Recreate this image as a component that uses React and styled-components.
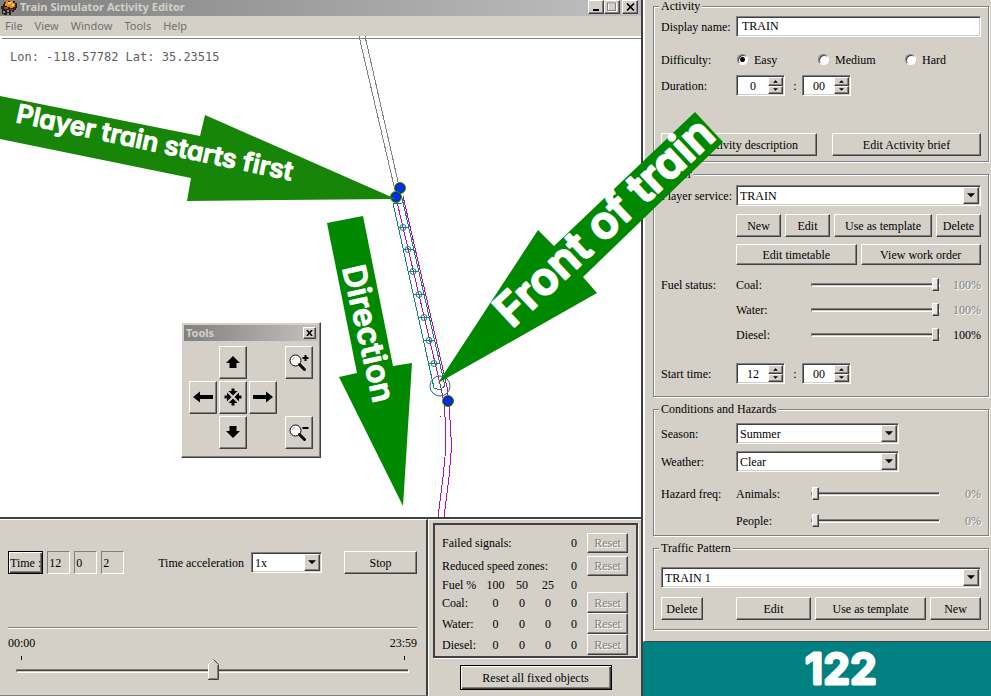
import React from "react";
import styled, { createGlobalStyle, css } from "styled-components";

const face = "#d4d0c8";
const shade = "#808080";
const dark = "#404040";
const serif = '"Liberation Serif", "Times New Roman", serif';
const sans = '"Noto Sans", Tahoma, sans-serif';

const GlobalStyle = createGlobalStyle`
  *, *::before, *::after { box-sizing: border-box; }
  body { margin: 0; background: ${face}; }
  button, input, select { font: inherit; color: inherit; margin: 0; }
`;

const raised = css`
  border: 1px solid;
  border-color: #fff ${dark} ${dark} #fff;
  box-shadow: inset -1px -1px ${shade};
`;

const sunken = css`
  border: 1px solid;
  border-color: ${shade} #fff #fff ${shade};
  box-shadow: inset 1px 1px ${dark}, inset -1px -1px ${face};
`;

const Page = styled.div`
  position: relative;
  display: grid;
  grid-template-columns: minmax(0, 1fr) 348px;
  min-height: 100vh;
  overflow: hidden;
  background: ${face};
  color: #000;
  font: 12px/14px ${serif};
`;

/* ---------- editor window ---------- */

const EditorWindow = styled.main`
  display: flex;
  flex-direction: column;
  min-width: 0;
  border-right: 2px solid ${dark};
`;

const TitleBar = styled.header`
  display: flex;
  align-items: center;
  gap: 2px;
  height: 16px;
  padding-right: 3px;
  background: linear-gradient(90deg, #808080, #c0c0c0);
  color: ${face};
  font: bold 11px/14px ${sans};

  h1 {
    flex: 1;
    margin: 0 0 2px;
    font: inherit;
  }
`;

const CaptionButtons = styled.div`
  display: flex;
  height: 14px;
  margin-bottom: 2px;

  button:last-child { margin-left: 2px; }
`;

const CaptionButton = styled.button`
  ${raised}
  display: grid;
  place-items: center;
  width: 16px;
  height: 14px;
  padding: 0;
  background: ${face};
`;

const MenuBar = styled.nav`
  display: flex;
  gap: 12px;
  height: 20px;
  padding: 2px 5px;
  color: #707070;
  font: 11px/16px ${sans};

  button {
    padding: 0;
    border: 0;
    background: none;
  }
`;

const MapArea = styled.section`
  position: relative;
  flex: 1;
  min-height: 480px;
  overflow: hidden;
  background: #fff;

  hr {
    height: 1px;
    margin: 2px 0 0 2px;
    border: 0;
    background: ${shade};
  }
`;

const Coordinates = styled.p`
  margin: 10px;
  color: #606060;
  font: 12px/16px "DejaVu Sans Mono", monospace;
`;

const TrackDrawing = styled.svg`
  position: absolute;
  top: 0;
  left: 0;
  width: 641px;
  height: 481px;
`;

const Palette = styled.section`
  ${raised}
  position: absolute;
  top: 286px;
  left: 181px;
  width: 140px;
  padding: 2px 2px 8px;
  background: ${face};
`;

const PaletteTitle = styled.div`
  display: flex;
  align-items: center;
  justify-content: space-between;
  height: 16px;
  padding: 0 2px;
  background: linear-gradient(90deg, #808080, #c4c2be);
  color: ${face};
  font: bold 11px/14px ${sans};

  h2 { margin: 0; font: inherit; }
  button { width: 13px; height: 12px; }
`;

const ToolGrid = styled.div`
  display: grid;
  grid-template: repeat(3, 33px) / 28px 28px 28px 4px 28px;
  gap: 2px;
  padding: 5px 5px 0;
`;

const ToolButton = styled.button`
  ${raised}
  grid-area: ${(p) => p.$area};
  display: grid;
  place-items: center;
  padding: 0 0 2px;
  background: ${face};
`;

/* ---------- shared controls ---------- */

const Button = styled.button`
  ${raised}
  height: ${(p) => p.$height || 23}px;
  padding: 0 1px;
  background: ${face};
  white-space: nowrap;

  &:disabled { color: ${shade}; text-shadow: 1px 1px #fff; }

  ${(p) => p.$framed && css`
    border-color: #000;
    box-shadow: inset 1px 1px #fff, inset -1px -1px ${dark}, inset -2px -2px ${shade};
  `}
`;

const TextField = styled.input`
  ${sunken}
  width: 100%;
  height: 21px;
  padding: 0 5px;
  border-radius: 0;
  background: #fff;
  outline: 0;
`;

const SelectFrame = styled.div`
  ${sunken}
  display: grid;
  grid-template-columns: minmax(0, 1fr) 16px;
  width: ${(p) => p.$width || "100%"};
  height: 21px;
  padding: 1px;
  background: #fff;

  select {
    grid-area: 1 / 1 / 2 / 3;
    appearance: none;
    padding: 0 18px 0 2px;
    border: 0;
    background: none;
    outline: 0;
  }
`;

const DropArrow = styled.span`
  ${raised}
  grid-area: 1 / 2 / 2 / 3;
  display: grid;
  place-items: center;
  background: ${face};
  pointer-events: none;
`;

const SpinFrame = styled.div`
  ${sunken}
  display: grid;
  grid-template: 1fr 1fr / minmax(0, 1fr) 15px;
  width: 49px;
  height: 21px;
  padding: 1px;
  background: #fff;

  input {
    grid-row: 1 / 3;
    min-width: 0;
    padding: 0;
    border: 0;
    background: none;
    outline: 0;
    text-align: center;
  }

  button {
    ${raised}
    display: grid;
    place-items: center;
    padding: 0;
    background: ${face};
  }
`;

const Clock = styled.div`
  display: flex;
  align-items: center;

  > span { width: 17px; padding-left: 3px; text-align: center; }
`;

const thumbShape = `url("data:image/svg+xml,%3Csvg xmlns='http://www.w3.org/2000/svg' width='11' height='21'%3E%3Cpath d='M.5 20.500V5.500L5.500.500L10.500 5.500V20.500Z' fill='%23d4d0c8' stroke='%23fff'/%3E%3Cpath d='M5.500.500L10.500 5.500V20.500H0' fill='none' stroke='%23404040'/%3E%3Cpath d='M9.500 6V19.500H1' fill='none' stroke='%23808080'/%3E%3C/svg%3E")`;

const Slider = styled.input`
  appearance: none;
  width: 100%;
  height: ${(p) => (p.$pointed ? 21 : 13)}px;
  background: none;

  &::-webkit-slider-runnable-track {
    height: 4px;
    border: 1px solid;
    border-color: ${shade} #fff #fff ${shade};
    background: linear-gradient(${dark} 1px, ${face} 1px);
  }

  &::-webkit-slider-thumb {
    appearance: none;
    ${(p) => p.$pointed ? css`
      width: 11px;
      height: 21px;
      margin-top: -11px;
      background: ${thumbShape};
    ` : css`
      ${raised}
      width: 7px;
      height: 13px;
      margin-top: -6px;
      background: ${(q) => (q.disabled ? "#e9e7e3" : face)};
    `}
  }
`;

/* ---------- simulation panels ---------- */

const BottomPanels = styled.div`
  display: grid;
  grid-template-columns: minmax(0, 1fr) 213px;
  border-top: 2px solid ${dark};
`;

const TimePanel = styled.section`
  padding: 31px 9px 14px 8px;
  border-top: 1px solid #fff;
  border-right: 2px solid ${dark};
  border-bottom: 1px solid ${shade};
`;

const TimeControls = styled.div`
  display: flex;
  align-items: center;
  padding-bottom: 53px;
  border-bottom: 1px solid ${shade};
  box-shadow: 0 1px #fff;

  label { margin: 0 7px 0 auto; }
  > button:last-child { width: 73px; margin-left: 22px; }
`;

const ClockCell = styled.output`
  width: 23px;
  height: 23px;
  margin-left: 4px;
  padding: 4px 1px;
  border: 1px solid;
  border-color: ${shade} #fff #fff ${shade};
`;

const TimeScale = styled.div`
  display: flex;
  justify-content: space-between;
  padding-top: 8px;
`;

const ScaleTicks = styled.div`
  display: flex;
  justify-content: space-between;
  height: 4px;
  margin: 6px 12px 0 13px;
  border: solid #000;
  border-width: 0 1px;
`;

const DaySlider = styled.div`
  display: flex;
  padding: 0 8px;
`;

const StatsPanel = styled.section`
  display: flex;
  flex-direction: column;
  align-items: center;
  gap: 7px;
  padding: 3px 3px 0 4px;
  border-top: 1px solid #fff;
  border-left: 1px solid #fff;
`;

const StatsFrame = styled.div`
  width: 100%;
  padding: 6px 8px 1px 7px;
  border: 2px solid ${dark};
  box-shadow: 1px 1px #fff;
`;

const StatsTable = styled.table`
  width: 100%;
  table-layout: fixed;
  border-collapse: collapse;

  th, td { padding: 0; font-weight: normal; text-align: center; }
  th[scope="row"] { text-align: left; white-space: nowrap; }
  button { display: block; width: 100%; }
`;

const StatsRow = styled.tr`
  height: ${(p) => p.$height}px;
`;

/* ---------- activity side panel ---------- */

const Side = styled.aside`
  display: flex;
  flex-direction: column;
  min-width: 0;
`;

const ActivityPanel = styled.form`
  display: flex;
  flex-direction: column;
  gap: 6px;
  margin: 0;
  padding: 0 2px 11px 8px;
  border-left: 2px solid #fff;
  border-bottom: 1px solid ${dark};
`;

const Group = styled.fieldset`
  min-width: 0;
  margin: 0;
  padding: 0 7px ${(p) => p.$bottom}px;
  border: 1px solid ${shade};
  box-shadow: inset 1px 1px #fff, 1px 1px #fff;

  legend {
    height: 12px;
    margin-left: -2px;
    padding: 0 2px;
    background: ${face};
    line-height: 12px;
  }
`;

const Row = styled.div`
  display: grid;
  grid-template-columns: 75px minmax(0, 1fr);
  align-items: center;
  min-height: 21px;
  margin-top: ${(p) => p.$gap}px;
`;

const ButtonRow = styled.div`
  grid-column: ${(p) => p.$column || "auto"};
  display: grid;
  grid-template-columns: ${(p) => p.$columns};
  gap: ${(p) => p.$gap ?? 4}px;
`;

const RadioRow = styled.div`
  display: grid;
  grid-template-columns: 81px 87px 1fr;
  padding-left: 1px;

  label { display: flex; align-items: center; gap: 6px; }
  input {
    appearance: none;
    width: 11px;
    height: 11px;
    border: 1px solid;
    border-color: ${shade} #fff #fff ${shade};
    border-radius: 50%;
    background: #fff;
    box-shadow: inset 1px 1px ${dark};
  }
  input:checked { background: radial-gradient(circle, #000 2px, #fff 3px); }
`;

const LevelRow = styled.div`
  display: grid;
  grid-template-columns: 75px 129px 1fr;
  align-items: center;

  output { text-align: right; }
  output[data-off="true"] { color: ${shade}; text-shadow: 1px 1px #fff; }
`;

const Banner = styled.div`
  flex: 1;
  display: grid;
  place-items: center;
  background: #008080;
`;

const BannerDrawing = styled.svg`
  width: 100px;
  height: 52px;
  margin-left: 48px;
`;

const Annotations = styled.svg`
  position: absolute;
  top: 0;
  left: 0;
  width: 991px;
  height: 696px;
  pointer-events: none;

  text {
    fill: #fff;
    stroke: #fff;
    stroke-linejoin: round;
    font-family: Inter, sans-serif;
    font-feature-settings: "cv11";
    font-weight: 600;
  }
`;

const Triangle = ({ up, size }) => (
  <svg width={size} height={(size + 1) / 2} viewBox="0 0 8 4" aria-hidden="true">
    <path d={up ? "M0 4L4 0L8 4Z" : "M0 0H8L4 4Z"} />
  </svg>
);

const Select = ({ id, value, width, label }) => (
  <SelectFrame $width={width}>
    <select id={id} aria-label={label} defaultValue={value}>
      <option>{value}</option>
    </select>
    <DropArrow><Triangle size={8} /></DropArrow>
  </SelectFrame>
);

const Spin = ({ id, label, value }) => (
  <SpinFrame>
    <input id={id} aria-label={label} defaultValue={value} />
    <button type="button" aria-label={`Increase ${label}`}><Triangle up size={5} /></button>
    <button type="button" aria-label={`Decrease ${label}`}><Triangle size={5} /></button>
  </SpinFrame>
);

const Level = ({ name, value, off }) => {
  const id = `level-${name.toLowerCase()}`;
  return (
    <LevelRow>
      <label htmlFor={id}>{name}:</label>
      <Slider id={id} type="range" defaultValue={value} disabled={off} />
      <output htmlFor={id} data-off={!!off}>{value}%</output>
    </LevelRow>
  );
};

const CloseGlyph = () => (
  <svg width="9" height="8" viewBox="0 0 9 8" aria-hidden="true">
    <path d="M1 0.500L8 7.500M8 0.500L1 7.500" stroke="#000" strokeWidth="1.700" />
  </svg>
);

const TrainIcon = () => (
  <svg width="18" height="16" viewBox="0 0 18 16" aria-hidden="true" shapeRendering="crispEdges">
    <path d="M4 2H6V1H15V3H17V8H16V10H14V12H11V15H9V13H7V15H4V14H2V9H1V6H3Z" fill="#2b211a" />
    <path d="M6 1H8V3H10V1H13V3H15V7H13V8H10V7H7V6H5V3H6Z" fill="#e98b20" />
    <path d="M8 2H11V4H8ZM12 4H14V6H12Z" fill="#ffd24a" />
    <path d="M4 7H8V9H4ZM10 9H13V10H10Z" fill="#9a4b16" />
    <path d="M3 11H5V13H3ZM7 10H9V12H7ZM11 11H12V12H11Z" fill="#8c8ca4" />
  </svg>
);

const ToolArrow = ({ turn, long }) => (
  <svg width={long ? 20 : 16} height={long ? 20 : 14} viewBox={long ? "-2 -3 20 20" : "0 0 16 14"} aria-hidden="true">
    <path
      d={long ? "M8 -3L13.500 4H10V17H6V4H2.500Z" : "M8 1L15 8H11.500V13H4.500V8H1Z"}
      transform={`rotate(${turn} 8 7)`}
    />
  </svg>
);

const CentreGlyph = () => (
  <svg width="20" height="18" viewBox="-10 -9 20 18" aria-hidden="true">
    {[0, 90, 180, 270].map((a) => (
      <path key={a} d="M-1.500 -8.500H1.500V-6H4.500L0 -1.500L-4.500 -6H-1.500Z" transform={`rotate(${a})`} />
    ))}
  </svg>
);

const Magnifier = ({ plus }) => (
  <svg width="22" height="22" viewBox="0 0 22 22" aria-hidden="true">
    <circle cx="7.500" cy="9.500" r="5.500" fill="#fff" stroke="#000" />
    <path d="M11.500 13.500L16.500 18.500" stroke="#000" strokeWidth="3" strokeLinecap="round" />
    <path d={plus ? "M14.500 7H20.500M17.500 4V10" : "M14.500 7H20.500"} stroke="#000" strokeWidth="2" />
    <path d="M4.500 9Q5 6.500 7 6.500" fill="none" stroke="#aaa" />
  </svg>
);

const couplings = [[403, 227], [408, 249], [413, 271], [419, 294], [424, 317], [429, 340], [434, 363]];
const nodes = [[400, 188], [396, 197], [448, 401]];

const Tracks = () => (
  <TrackDrawing viewBox="0 36 641 481" fill="none" role="img" aria-label="Track map">
    <g shapeRendering="crispEdges">
      <path d="M359 36L394 186M365 36L399 186" stroke="#808080" />
      <path d="M403 196L447 387L449 403L451 437V453L449 477L444 517M397 202L441 388L444 403L446 430L445 457L443 477L438 517" stroke="#b010b0" />
      <path d="M393 203L434 388H437M402 198L445 386L441 389H437M393 203H402" stroke="#108080" />
    </g>
    {couplings.map(([x, y]) => (
      <g key={y} stroke="#108080">
        <path d={`M${x - 5} ${y}.5H${x + 6}`} />
        <circle cx={x} cy={y + 0.5} r="3" />
      </g>
    ))}
    <circle cx="440" cy="386" r="10" stroke="#306090" />
    <path d="M440 416.500H441" stroke="#333" />
    {nodes.map(([x, y]) => (
      <g key={x}>
        <circle cx={x} cy={y} r="5.500" fill="#0b3b12" stroke="#3a8a3a" />
        <circle cx={x} cy={y} r="4" fill="#0828ff" />
      </g>
    ))}
  </TrackDrawing>
);

const fuels = ["Coal", "Water", "Diesel"];

export default function App() {
  return (
    <Page>
      <GlobalStyle />
      <EditorWindow>
        <TitleBar>
          <TrainIcon />
          <h1>Train Simulator Activity Editor</h1>
          <CaptionButtons>
            <CaptionButton aria-label="Minimize">
              <svg width="8" height="8" aria-hidden="true"><path d="M1 6H7V8H1Z" /></svg>
            </CaptionButton>
            <CaptionButton aria-label="Maximize">
              <svg width="10" height="10" aria-hidden="true">
                <path d="M1.500 1.500H9.500V9.500H1.500Z" fill="none" stroke="#fff" />
                <path d="M.5 1H8.500V8.500H.5Z" fill="none" stroke="#808080" />
              </svg>
            </CaptionButton>
            <CaptionButton aria-label="Close"><CloseGlyph /></CaptionButton>
          </CaptionButtons>
        </TitleBar>
        <MenuBar>
          {["File", "View", "Window", "Tools", "Help"].map((m) => (
            <button key={m} type="button">{m}</button>
          ))}
        </MenuBar>
        <MapArea>
          <hr />
          <Coordinates>Lon: -118.57782 Lat: 35.23515</Coordinates>
          <Tracks />
          <Palette>
            <PaletteTitle>
              <h2>Tools</h2>
              <CaptionButton aria-label="Close tools">
                <svg width="7" height="6" viewBox="0 0 9 8" aria-hidden="true">
                  <path d="M1 0L8 8M8 0L1 8" stroke="#000" strokeWidth="2" />
                </svg>
              </CaptionButton>
            </PaletteTitle>
            <ToolGrid>
              <ToolButton $area="1 / 2" aria-label="Pan up"><ToolArrow turn={0} /></ToolButton>
              <ToolButton $area="1 / 5" aria-label="Zoom in"><Magnifier plus /></ToolButton>
              <ToolButton $area="2 / 1" aria-label="Pan left"><ToolArrow turn={270} long /></ToolButton>
              <ToolButton $area="2 / 2" aria-label="Centre"><CentreGlyph /></ToolButton>
              <ToolButton $area="2 / 3" aria-label="Pan right"><ToolArrow turn={90} long /></ToolButton>
              <ToolButton $area="3 / 2" aria-label="Pan down"><ToolArrow turn={180} /></ToolButton>
              <ToolButton $area="3 / 5" aria-label="Zoom out"><Magnifier /></ToolButton>
            </ToolGrid>
          </Palette>
        </MapArea>

        <BottomPanels>
          <TimePanel>
            <TimeControls>
              <Button $framed>Time :</Button>
              <ClockCell>12</ClockCell>
              <ClockCell>0</ClockCell>
              <ClockCell>2</ClockCell>
              <label htmlFor="acceleration">Time acceleration</label>
              <Select id="acceleration" value="1x" width="71px" />
              <Button>Stop</Button>
            </TimeControls>
            <TimeScale><span>00:00</span><span>23:59</span></TimeScale>
            <ScaleTicks />
            <DaySlider>
              <Slider $pointed type="range" aria-label="Time of day" min="0" max="1439" defaultValue="722" />
            </DaySlider>
          </TimePanel>

          <StatsPanel>
            <StatsFrame>
              <StatsTable>
                <colgroup>
                  <col width="40" /><col width="27" /><col width="26" />
                  <col width="26" /><col width="26" /><col width="41" />
                </colgroup>
                <tbody>
                  <StatsRow $height={24}>
                    <th scope="row" colSpan={4}>Failed signals:</th>
                    <td>0</td>
                    <td><Button $height={20} disabled>Reset</Button></td>
                  </StatsRow>
                  <StatsRow $height={22}>
                    <th scope="row" colSpan={4}>Reduced speed zones:</th>
                    <td>0</td>
                    <td><Button $height={20} disabled>Reset</Button></td>
                  </StatsRow>
                  <StatsRow $height={15}>
                    <th scope="row">Fuel %</th>
                    {[100, 50, 25, 0].map((n) => <th key={n} scope="col">{n}</th>)}
                    <td />
                  </StatsRow>
                  {fuels.map((f) => (
                    <StatsRow key={f} $height={21}>
                      <th scope="row">{f}:</th>
                      <td>0</td><td>0</td><td>0</td><td>0</td>
                      <td><Button $height={21} disabled>Reset</Button></td>
                    </StatsRow>
                  ))}
                </tbody>
              </StatsTable>
            </StatsFrame>
            <ButtonRow $columns="152px"><Button $height={25} $framed>Reset all fixed objects</Button></ButtonRow>
          </StatsPanel>
        </BottomPanels>
      </EditorWindow>

      <Side>
        <ActivityPanel>
          <Group $bottom={5}>
            <legend>Activity</legend>
            <Row $gap={4}>
              <label htmlFor="display-name">Display name:</label>
              <TextField id="display-name" defaultValue="TRAIN" />
            </Row>
            <Row $gap={12}>
              <span id="difficulty">Difficulty:</span>
              <RadioRow role="radiogroup" aria-labelledby="difficulty">
                {["Easy", "Medium", "Hard"].map((d) => (
                  <label key={d}>
                    <input type="radio" name="difficulty" defaultChecked={d === "Easy"} />
                    {d}
                  </label>
                ))}
              </RadioRow>
            </Row>
            <Row $gap={5}>
              <label htmlFor="duration">Duration:</label>
              <Clock>
                <Spin id="duration" label="duration hours" value="0" />
                <span>:</span>
                <Spin label="duration minutes" value="00" />
              </Clock>
            </Row>
            <Row $gap={37}>
              <ButtonRow $column="1 / 3" $columns="156px 149px" $gap={15}>
                <Button type="button">Edit Activity description</Button>
                <Button type="button">Edit Activity brief</Button>
              </ButtonRow>
            </Row>
          </Group>

          <Group $bottom={12}>
            <legend>Player</legend>
            <Row $gap={5}>
              <label htmlFor="service">Player service:</label>
              <Select id="service" value="TRAIN" />
            </Row>
            <Row $gap={8}>
              <ButtonRow $column="2" $columns="45px 45px 1fr 45px">
                <Button type="button">New</Button>
                <Button type="button">Edit</Button>
                <Button type="button">Use as template</Button>
                <Button type="button">Delete</Button>
              </ButtonRow>
            </Row>
            <Row $gap={7}>
              <ButtonRow $column="2" $columns="1fr 1fr">
                <Button type="button" $height={21}>Edit timetable</Button>
                <Button type="button" $height={21}>View work order</Button>
              </ButtonRow>
            </Row>
            <Row $gap={9}>
              <span>Fuel status:</span>
              <Level name="Coal" value={100} off />
            </Row>
            <Row $gap={4}><span /><Level name="Water" value={100} off /></Row>
            <Row $gap={4}><span /><Level name="Diesel" value={100} /></Row>
            <Row $gap={18}>
              <label htmlFor="start">Start time:</label>
              <Clock>
                <Spin id="start" label="start hours" value="12" />
                <span>:</span>
                <Spin label="start minutes" value="00" />
              </Clock>
            </Row>
          </Group>

          <Group $bottom={4}>
            <legend>Conditions and Hazards</legend>
            <Row $gap={8}>
              <label htmlFor="season">Season:</label>
              <Select id="season" value="Summer" width="163px" />
            </Row>
            <Row $gap={7}>
              <label htmlFor="weather">Weather:</label>
              <Select id="weather" value="Clear" width="163px" />
            </Row>
            <Row $gap={11}>
              <span>Hazard freq:</span>
              <Level name="Animals" value={0} off />
            </Row>
            <Row $gap={6}><span /><Level name="People" value={0} off /></Row>
          </Group>

          <Group $bottom={9}>
            <legend>Traffic Pattern</legend>
            <Row $gap={13}>
              <ButtonRow $column="1 / 3" $columns="1fr">
                <Select label="Traffic pattern" value="TRAIN 1" />
              </ButtonRow>
            </Row>
            <Row $gap={9}>
              <ButtonRow $columns="42px"><Button type="button">Delete</Button></ButtonRow>
              <ButtonRow $columns="75px 1fr 51px">
                <Button type="button">Edit</Button>
                <Button type="button">Use as template</Button>
                <Button type="button">New</Button>
              </ButtonRow>
            </Row>
          </Group>
        </ActivityPanel>
        <Banner>
          <BannerDrawing viewBox="0 0 100 52" role="img" aria-label="122">
            <text x="50" y="41" textAnchor="middle" fill="#fff" stroke="#fff" strokeWidth="3" strokeLinejoin="round" fontFamily="Inter" fontWeight="600" fontSize="43">122</text>
          </BannerDrawing>
        </Banner>
      </Side>

      <Annotations viewBox="0 0 991 696">
        <path d="M0 96L200 136L205 115L396 199L187 201L191 178L0 139Z" fill="#178507" />
        <path d="M327 223L363 216L393 366L412 363L403 506L339 377L357 373Z" fill="#008800" />
        <path d="M438 383L538 230L554 246L695 112L723 142L583 277L597 293Z" fill="#008800" />
        <text transform="translate(15 122) rotate(12)" fontSize="26" strokeWidth="1">Player train starts first</text>
        <text transform="translate(342 268) rotate(77)" fontSize="32" strokeWidth="1">Direction</text>
        <text transform="translate(512 329) rotate(-43)" fontSize="45" strokeWidth="2">Front of train</text>
      </Annotations>
    </Page>
  );
}
